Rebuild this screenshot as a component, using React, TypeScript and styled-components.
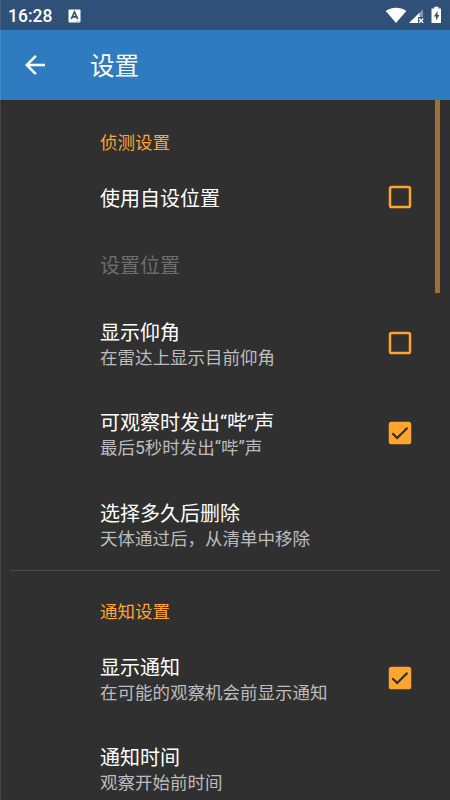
import React from 'react';
import styled, { createGlobalStyle } from 'styled-components';

const accent = '#ffa52e';

const GlobalStyle = createGlobalStyle`
  body {
    margin: 0;
    background: #303030;
    overflow: hidden;
  }
  * { box-sizing: border-box; }
`;

const Screen = styled.div`
  position: relative;
  display: flex;
  flex-direction: column;
  height: 800px;
  width: 450px;
  overflow: hidden;
  background: #303030;
  font-family: Roboto, 'Noto Sans CJK SC', sans-serif;

  &::after {
    content: '';
    position: absolute;
    inset: 0;
    border-left: 1px solid rgba(255, 255, 255, 0.1);
    pointer-events: none;
  }
`;

const StatusBar = styled.header`
  display: flex;
  align-items: center;
  flex: none;
  height: 30px;
  padding: 2px 7px 0 8px;
  background: #2f5077;
  color: #fff;
`;

const Clock = styled.span`
  width: 60px;
  font-size: 17.5px;
  font-weight: 500;
  line-height: 26px;
`;

const StatusIcons = styled.div`
  display: flex;
  align-items: center;
  margin: -2px 0 0 auto;
`;

const AppBar = styled.div`
  display: flex;
  align-items: center;
  flex: none;
  height: 70px;
  padding-left: 20px;
  background: #2f7bbf;
  color: #fff;
`;

const BackButton = styled.button`
  display: flex;
  width: 70px;
  padding: 0;
  border: 0;
  background: none;
  color: inherit;
`;

const Heading = styled.h1`
  margin: 4px 0 0;
  font-size: 24.6px;
  font-weight: 400;
  line-height: 30px;
`;

const List = styled.main`
  position: relative;
  flex: 1;
`;

const ScrollThumb = styled.div`
  position: absolute;
  top: 0;
  right: 10px;
  width: 5px;
  height: 193px;
  background: #a07136;
`;

const Group = styled.section<{ $divided?: boolean }>`
  margin: 0 10px;
  border-top: ${(p) => (p.$divided ? '1px solid #4b4b4b' : '0')};
`;

const GroupTitle = styled.h2<{ $first?: boolean }>`
  height: ${(p) => (p.$first ? 64 : 62.5)}px;
  margin: 0;
  padding: ${(p) => (p.$first ? 31 : 29)}px 0 0 90px;
  color: ${accent};
  font-size: 17.5px;
  font-weight: 400;
  line-height: 25px;
`;

const Row = styled.div<{ $single?: boolean }>`
  display: flex;
  align-items: center;
  height: ${(p) => (p.$single ? 67 : 90.5)}px;
  padding: 0 28px 0 90px;
`;

const RowText = styled.div<{ $single?: boolean }>`
  flex: 1;
  padding-top: ${(p) => (p.$single ? 3 : 4)}px;
  white-space: nowrap;
`;

const Title = styled.div<{ $disabled?: boolean }>`
  color: ${(p) => (p.$disabled ? '#6c6c6c' : '#fff')};
  font-size: 20px;
  line-height: 25px;
`;

const Summary = styled.div`
  color: #bcbcbc;
  font-size: 17.5px;
  line-height: 24px;
`;

const Check = styled.svg`
  flex: none;
  width: 24px;
  height: 24px;
  margin-top: -1px;
`;

interface Setting {
  title: string;
  summary?: string;
  checked?: boolean;
  disabled?: boolean;
}

const detection: Setting[] = [
  { title: '使用自设位置', checked: false },
  { title: '设置位置', disabled: true },
  { title: '显示仰角', summary: '在雷达上显示目前仰角', checked: false },
  { title: '可观察时发出“哔”声', summary: '最后5秒时发出“哔”声', checked: true },
  { title: '选择多久后删除', summary: '天体通过后，从清单中移除' },
];

const notifications: Setting[] = [
  { title: '显示通知', summary: '在可能的观察机会前显示通知', checked: true },
  { title: '通知时间', summary: '观察开始前时间' },
];

function SettingRow({ title, summary, checked, disabled }: Setting) {
  return (
    <Row $single={!summary}>
      <RowText $single={!summary}>
        <Title $disabled={disabled}>{title}</Title>
        {summary && <Summary>{summary}</Summary>}
      </RowText>
      {checked !== undefined && (
        <Check viewBox="0 0 24 24" role="checkbox" aria-checked={checked}>
          <rect
            x="2"
            y="2"
            width="20"
            height="20"
            rx="1.6"
            fill={checked ? accent : 'none'}
            stroke={accent}
            strokeWidth="2.5"
          />
          {checked && (
            <path d="M4.3 12.2 9.2 17 19.5 6.8" fill="none" stroke="#303020" strokeWidth="2.3" />
          )}
        </Check>
      )}
    </Row>
  );
}

export default function App() {
  return (
    <>
      <GlobalStyle />
      <Screen>
        <StatusBar>
          <Clock>16:28</Clock>
          <svg width="13" height="14" viewBox="0 0 13 14">
            <rect x="0.5" y="0.5" width="12" height="13" rx="1" fill="#fff" />
            <path d="M3.3 10 6.5 3 9.7 10M4.5 7.9h4" fill="none" stroke="#2f5077" strokeWidth="1.7" />
            <path d="M7.5 12.2h4" stroke="#9aabc0" strokeWidth="0.8" />
          </svg>
          <StatusIcons>
            <svg width="57" height="20" viewBox="0 0 57 20">
              <path d="M-0.3 6C5.7 1.6 14.3 1.6 20.3 6L10 18Z" fill="#fff" />
              <path d="M23 18 37 4.3V12h-5v6Z" fill="#8296ae" />
              <path d="M23 18 33.5 7.7V12H32v6Z" fill="#fff" />
              <path d="m33 13.5 4.2 4.2m0-4.2L33 17.7" stroke="#fff" strokeWidth="1.4" />
              <path d="M48.2 1.7h4.4v1.8H55V18h-9.5V3.5h2.7Z" fill="#fff" />
              <path d="M51.6 5.7 47.9 11.5h2.2v4l3.3-5.6h-2Z" fill="#2f5077" />
            </svg>
          </StatusIcons>
        </StatusBar>
        <AppBar>
          <BackButton aria-label="返回">
            <svg width="30" height="30" viewBox="0 0 24 24">
              <path d="M20 11H7.83l5.59-5.59L12 4l-8 8 8 8 1.41-1.41L7.83 13H20v-2z" fill="currentColor" />
            </svg>
          </BackButton>
          <Heading>设置</Heading>
        </AppBar>
        <List>
          <Group>
            <GroupTitle $first>侦测设置</GroupTitle>
            {detection.map((s) => (
              <SettingRow key={s.title} {...s} />
            ))}
          </Group>
          <Group $divided>
            <GroupTitle>通知设置</GroupTitle>
            {notifications.map((s) => (
              <SettingRow key={s.title} {...s} />
            ))}
          </Group>
          <ScrollThumb />
        </List>
      </Screen>
    </>
  );
}
